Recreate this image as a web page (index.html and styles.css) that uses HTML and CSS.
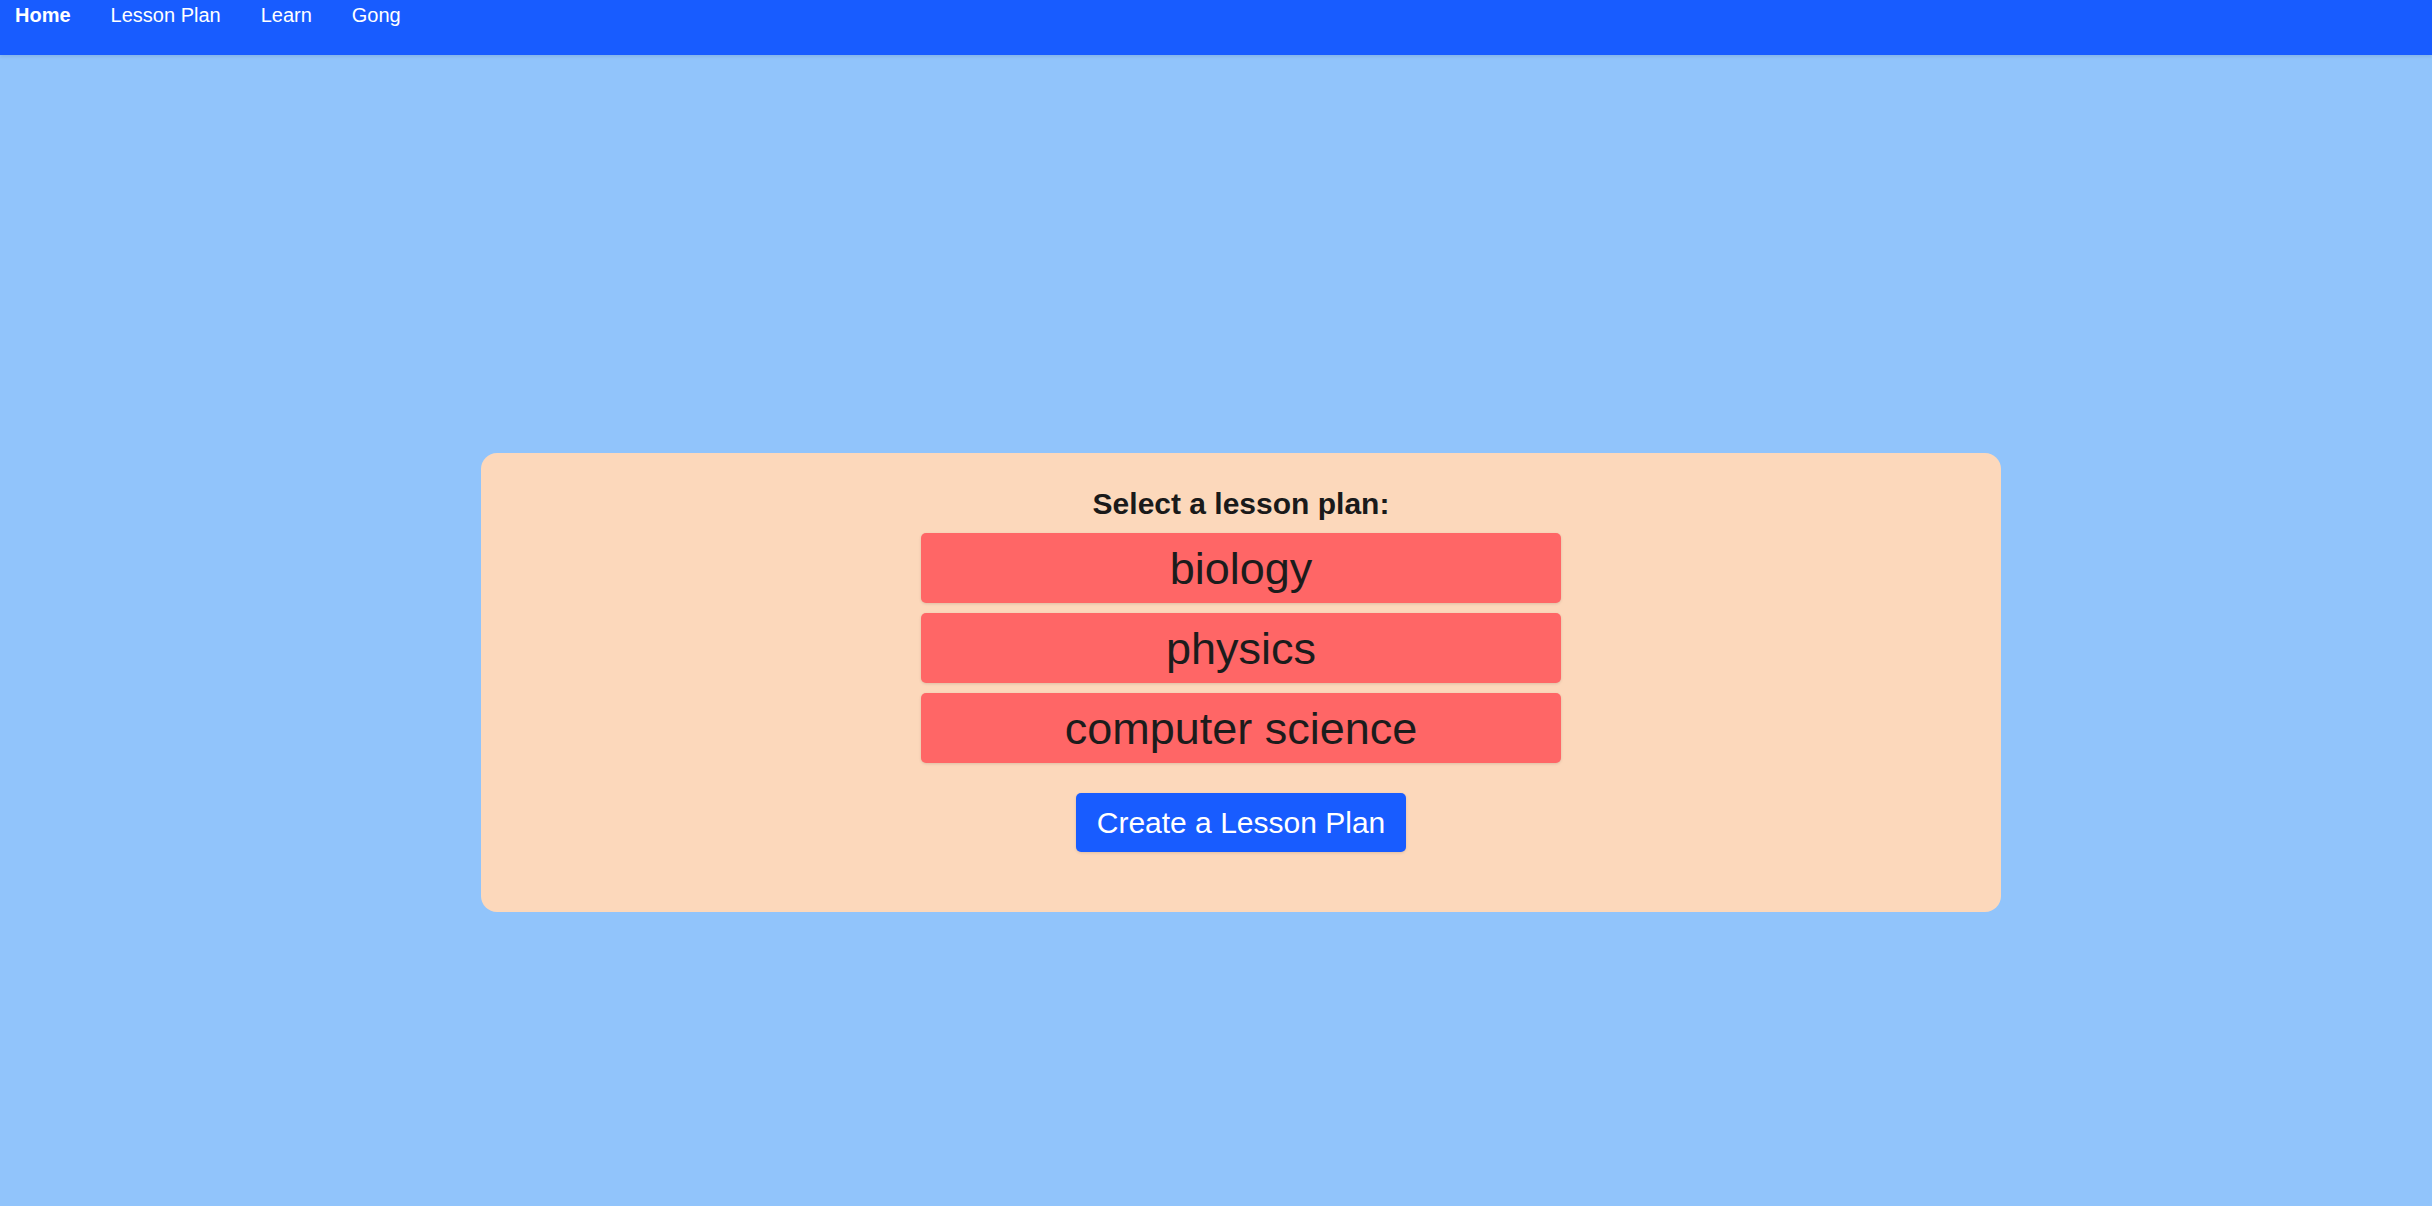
FILE: index.html
```html
<!DOCTYPE html>
<html lang="en">
<head>
<meta charset="utf-8">
<title>Lesson Plans</title>
<link rel="stylesheet" href="styles.css">
</head>
<body>
<nav class="topnav">
  <a class="nav-link active" href="#">Home</a>
  <a class="nav-link" href="#">Lesson Plan</a>
  <a class="nav-link" href="#">Learn</a>
  <a class="nav-link" href="#">Gong</a>
</nav>
<main class="page">
  <section class="card">
    <h3 class="card-title">Select a lesson plan:</h3>
    <div class="plan-list">
      <button class="plan-btn">biology</button>
      <button class="plan-btn">physics</button>
      <button class="plan-btn">computer science</button>
    </div>
    <button class="create-btn">Create a Lesson Plan</button>
  </section>
</main>
</body>
</html>
```

FILE: styles.css
```css
html, body {
  margin: 0;
  padding: 0;
}
body {
  background: #91c4fb;
  font-family: "Liberation Sans", Arial, sans-serif;
  min-height: 1206px;
}
.topnav {
  height: 55px;
  box-sizing: border-box;
  background: #185cff;
  display: flex;
  align-items: flex-start;
  gap: 40px;
  padding: 4px 0 0 15px;
  box-shadow: 0 2px 3px rgba(0, 0, 0, 0.08);
}
.nav-link {
  color: #ffffff;
  text-decoration: none;
  font-size: 20px;
  line-height: 23px;
}
.nav-link.active {
  font-weight: bold;
}
.page {
  padding: 398px 0 0 481px;
}
.card {
  width: 1520px;
  box-sizing: border-box;
  background: #fcd8bb;
  border-radius: 16px;
  padding: 33px 0 60px;
  display: flex;
  flex-direction: column;
  align-items: center;
}
.card-title {
  margin: 0 0 12px;
  font-size: 30px;
  line-height: 35px;
  font-weight: bold;
  color: #1a1a1a;
}
.plan-list {
  display: flex;
  flex-direction: column;
  gap: 10px;
  margin-bottom: 30px;
}
.plan-btn {
  width: 640px;
  height: 70px;
  box-sizing: border-box;
  border: none;
  border-radius: 5px;
  background: #ff6666;
  color: #1c1c1c;
  font-family: "Liberation Sans", Arial, sans-serif;
  font-size: 45px;
  line-height: 52px;
  padding: 10px 0 8px;
  box-shadow: 0 1px 3px rgba(0, 0, 0, 0.12);
  cursor: pointer;
}
.create-btn {
  border: none;
  border-radius: 5px;
  background: #185cff;
  color: #ffffff;
  font-family: "Liberation Sans", Arial, sans-serif;
  font-size: 30px;
  line-height: 35px;
  padding: 12px 21px;
  box-shadow: 0 1px 3px rgba(0, 0, 0, 0.12);
  cursor: pointer;
}
```
